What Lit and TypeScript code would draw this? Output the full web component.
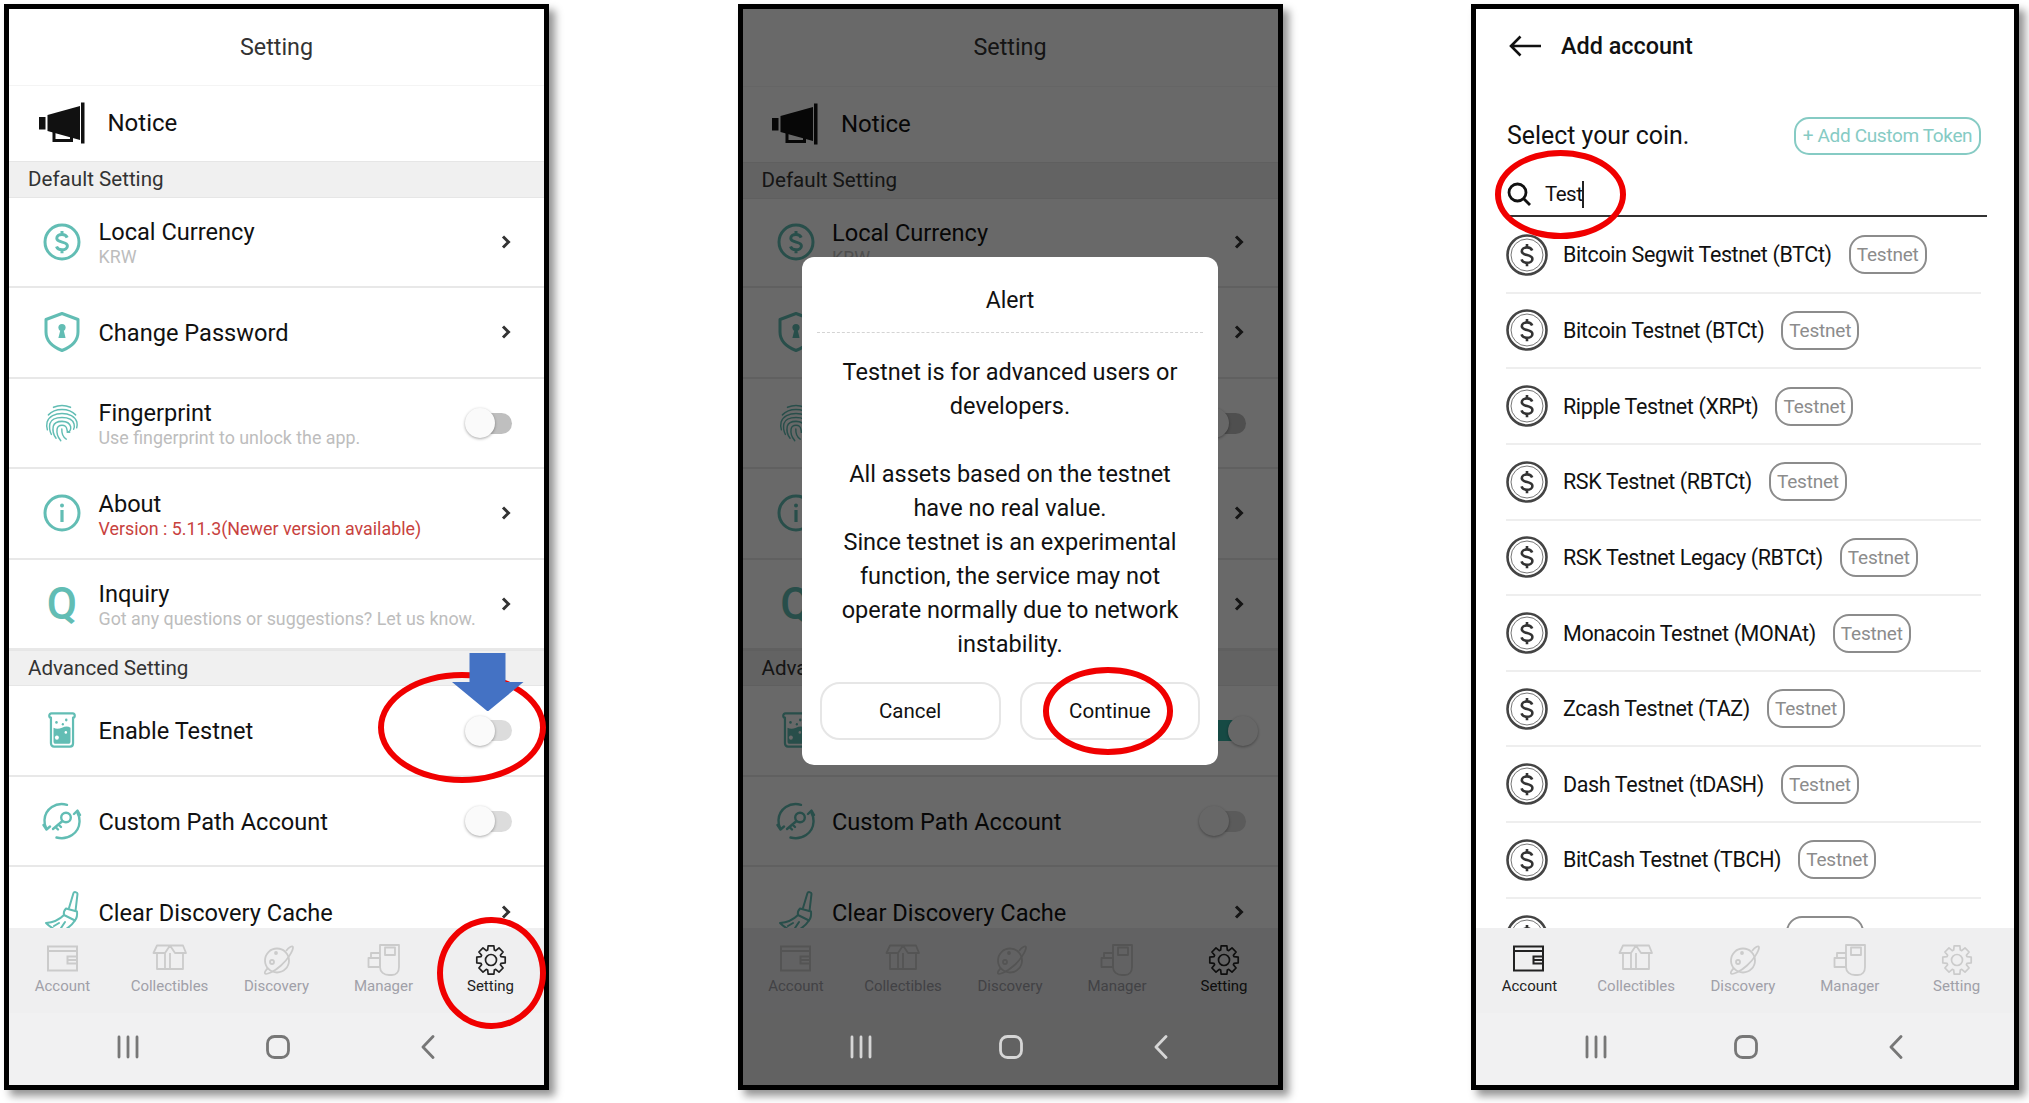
import { LitElement, css, html } from "lit";
import { customElement } from "lit/decorators.js";

const TEAL = "#62bdb4";

// 8-tooth gear outline, used by the Setting tab
function gearPath(cx: number, cy: number): string {
  const parts: string[] = [];
  const teeth = 8;
  for (let i = 0; i < teeth; i++) {
    const a = (i / teeth) * Math.PI * 2;
    const pts: Array<[number, number]> = [
      [a - 0.32, 10.5],
      [a - 0.2, 14.5],
      [a + 0.2, 14.5],
      [a + 0.32, 10.5],
    ];
    for (const [t, r] of pts) {
      const x = (cx + Math.cos(t) * r).toFixed(2);
      const y = (cy + Math.sin(t) * r).toFixed(2);
      parts.push(`${parts.length ? "L" : "M"}${x} ${y}`);
    }
  }
  return parts.join(" ") + " Z";
}

const dollarPath =
  "M25.2 15.6c-.8-2-2.7-3.2-5.2-3.2-3 0-5.2 1.6-5.2 3.9 0 5 10.6 2.6 10.6 7.6 0 2.3-2.3 3.9-5.4 3.9-2.6 0-4.7-1.2-5.5-3.4M20 9v3.4M20 27.8v3.4";

const rowIcons = {
  dollar: html`<svg viewBox="0 0 40 40" width="40" height="40" fill="none" stroke=${TEAL} stroke-width="3">
    <circle cx="20" cy="20" r="17"></circle><path d=${dollarPath}></path></svg>`,
  shield: html`<svg viewBox="0 0 40 40" width="40" height="40" fill="none" stroke=${TEAL} stroke-width="3" stroke-linejoin="round">
    <path d="M20 1.5 36 7.5V20c0 9-7 15-16 18.5C11 35 4 29 4 20V7.5Z"></path>
    <circle cx="20" cy="15.5" r="3.6" fill=${TEAL} stroke="none"></circle>
    <path d="M18.6 17h2.8l2.2 9h-7.2Z" fill=${TEAL} stroke="none"></path></svg>`,
  finger: html`<svg viewBox="0 0 40 40" width="34" height="38" preserveAspectRatio="none" fill="none" stroke=${TEAL} stroke-width="1.7" stroke-linecap="round">
    <path d="M10 3.5c6.500-2.500 13.500-2.500 20 0"></path>
    <path d="M4 11.500C8 7.500 14 5.800 20 5.800s12 1.700 16 5.700"></path>
    <path d="M2.800 27c-1-3-1-5.500-.3-8C4.500 13 12 10 20 10s15.500 3 17.500 9c.5 2 .4 4-.2 6"></path>
    <path d="M7.500 32c-2-3.500-2.700-7.500-1.700-11.500C7.300 16.500 13 14.200 20 14.200s12.700 2.300 14.200 6.800c.6 2.200.3 4-.5 5.500"></path>
    <path d="M13 36c-3-3.500-4.300-8-3.300-12.500C10.800 20 15 18.300 20 18.300s9.200 2 10.200 5.700c.5 3-1.200 5.800-4.200 5.600"></path>
    <path d="M18.500 38.500c-3.500-3.500-5-8-4.300-12 .5-2.800 3-4.200 5.800-4.200s5.300 1.500 5.700 4.200c.3 2.500 1.500 3.500 3.300 3.200"></path>
    <path d="M25 37c-3.500-2-5.500-6-5.200-10.500"></path></svg>`,
  info: html`<svg viewBox="0 0 40 40" width="40" height="40" fill="none" stroke=${TEAL} stroke-width="3">
    <circle cx="20" cy="20" r="17"></circle>
    <circle cx="20" cy="12.500" r="2" fill=${TEAL} stroke="none"></circle>
    <rect x="18.400" y="17" width="3.200" height="12" fill=${TEAL} stroke="none"></rect></svg>`,
  beaker: html`<svg viewBox="0 0 40 40" width="34" height="38" preserveAspectRatio="none" fill="none" stroke=${TEAL} stroke-width="2.600" stroke-linejoin="round">
    <path d="M5 5c0-1.500 1-2.500 2.500-2.500h25C34 2.500 35 3.500 35 5c0 1.500-1 2-2 2v27c0 2-1.500 3.500-3.500 3.500h-19C8.500 37.500 7 36 7 34V7c-1 0-2-.5-2-2Z"></path>
    <path d="M10 17.500c3 1.500 6 1.500 10 0s7-1.500 10 0V32c0 1.500-1 2.500-2.500 2.500h-15C11 34.500 10 33.500 10 32Z" fill=${TEAL} stroke="none"></path>
    <circle cx="14" cy="28" r="2.300" fill="#fff" stroke="none"></circle>
    <circle cx="24.500" cy="22.500" r="1.500" fill="#fff" stroke="none"></circle>
    <circle cx="13.500" cy="12" r="1.500" fill=${TEAL} stroke="none"></circle>
    <circle cx="25" cy="9.500" r="1.500" fill=${TEAL} stroke="none"></circle>
    <circle cx="21" cy="14" r="1.300" fill=${TEAL} stroke="none"></circle></svg>`,
  path: html`<svg viewBox="0 0 40 40" width="40" height="40" fill="none" stroke=${TEAL} stroke-width="2.400" stroke-linecap="round" stroke-linejoin="round">
    <path d="M25 3.800C14 .5 3 8 2.500 19c-.2 3 .5 6 1.800 8.500"></path>
    <path d="M14.500 36.500C26 39.500 37 32 37.500 21c.2-3.500-.6-6.500-2-9"></path>
    <path d="M32 13l3.500-3.500L38 14M1.500 24l3 4.500 3.500-3"></path>
    <circle cx="24" cy="16.500" r="4.800"></circle>
    <path d="M20.500 20 11 28M13.500 26l2.500 2.500M16.500 23.500l2.500 2.500"></path></svg>`,
  broom: html`<svg viewBox="0 0 40 44" width="40" height="44" fill="none" stroke=${TEAL} stroke-width="2" stroke-linejoin="round" stroke-linecap="round">
    <path d="M27 18 31.500 3c.5-1.500 4-1 4 .8L33.500 21"></path>
    <path d="M24 18.500 35 21.500c.5 4-.5 7-2 9L22 25c-.5-2 .5-5 2-6.500Z"></path>
    <path d="M22 25c-4 4-10 7.500-18 8 3 3 8 6.500 14 9 4-1 11-5.500 15-11.500M12 36l5-3M19 38l4-6"></path></svg>`,
};

const megaphone = html`<svg viewBox="0 0 46 42" width="46" height="42" fill="#111">
  <rect x="0" y="15" width="6.500" height="12.500"></rect>
  <path d="M8.500 13 41 4v34L8.500 29Z"></path>
  <rect x="42" y="0.500" width="3.500" height="41"></rect>
  <path d="M15 29v9.500h17.500V34" fill="none" stroke="#111" stroke-width="3"></path></svg>`;

const chevron = html`<svg class="chev" viewBox="0 0 10 14" width="10" height="14" fill="none" stroke="#333" stroke-width="3" stroke-linejoin="miter">
  <path d="M2 1.500 7.500 7 2 12.500"></path></svg>`;

const tabIcons = {
  wallet: html`<svg viewBox="0 0 36 36" width="36" height="36" fill="none" stroke="currentColor" stroke-width="2">
    <rect x="3" y="4.500" width="29" height="24"></rect><path d="M3 9h29M32 14.500h-9.500v7H32M22.500 18H32"></path></svg>`,
  box: html`<svg viewBox="0 0 36 36" width="36" height="36" fill="none" stroke="currentColor" stroke-width="1.800" stroke-linejoin="round">
    <path d="M5 12v15h26V12M18 11v16M13 11v16M1.500 11 5 3.500h13L13 11ZM34 11 31 3.500H18L23 11Z"></path><path d="M13 11H1.500M23 11h11"></path></svg>`,
  planet: html`<svg viewBox="0 0 36 36" width="36" height="36" fill="none" stroke="currentColor" stroke-width="1.800">
    <circle cx="18" cy="18.500" r="12"></circle><circle cx="13" cy="20" r="2"></circle><circle cx="17" cy="11" r="1"></circle>
    <path d="M27 9c3-4 7-6 7-3.500 0 3-5 12-12 18-7 6.500-15 9.500-16 8-.7-1 .5-3 3-5.500"></path></svg>`,
  manager: html`<svg viewBox="0 0 36 36" width="36" height="36" fill="none" stroke="currentColor" stroke-width="1.800" stroke-linejoin="round">
    <path d="M14 3h19v22c0 5-3 8-7 8h-3c-5 0-9-3-9-8Z"></path><rect x="19" y="5.500" width="10" height="7.500"></rect>
    <path d="M14 11H5v5h9M2.500 16H14v9H2.500Z"></path></svg>`,
  gear: html`<svg viewBox="0 0 36 36" width="36" height="36" fill="none" stroke="currentColor" stroke-width="1.700" stroke-linejoin="round">
    <path d=${gearPath(18, 18)}></path><circle cx="18" cy="18" r="5.500"></circle></svg>`,
};

const navIcons = html`<div class="nav">
  <svg viewBox="0 0 30 24" width="30" height="24" fill="none" stroke="currentColor" stroke-width="2.800" stroke-linecap="round">
    <path d="M6 2v20M15 2v20M24 2v20"></path></svg>
  <svg viewBox="0 0 30 24" width="30" height="24" fill="none" stroke="currentColor" stroke-width="2.800">
    <rect x="4.500" y="1.500" width="21" height="21" rx="7"></rect></svg>
  <svg viewBox="0 0 30 24" width="30" height="24" fill="none" stroke="currentColor" stroke-width="2.800" stroke-linecap="round" stroke-linejoin="round">
    <path d="M20 1.500 10 12l10 10.500"></path></svg>
</div>`;

const tabs = [
  { icon: tabIcons.wallet, label: "Account" },
  { icon: tabIcons.box, label: "Collectibles" },
  { icon: tabIcons.planet, label: "Discovery" },
  { icon: tabIcons.manager, label: "Manager" },
  { icon: tabIcons.gear, label: "Setting" },
];

interface Row {
  icon: keyof typeof rowIcons | "q";
  title: string;
  sub?: string;
  red?: boolean;
  toggle?: "dark" | "light";
}

const defaultRows: Row[] = [
  { icon: "dollar", title: "Local Currency", sub: "KRW" },
  { icon: "shield", title: "Change Password" },
  { icon: "finger", title: "Fingerprint", sub: "Use fingerprint to unlock the app.", toggle: "dark" },
  { icon: "info", title: "About", sub: "Version : 5.11.3(Newer version available)", red: true },
  { icon: "q", title: "Inquiry", sub: "Got any questions or suggestions? Let us know." },
];

const advancedRows: Row[] = [
  { icon: "beaker", title: "Enable Testnet", toggle: "light" },
  { icon: "path", title: "Custom Path Account", toggle: "light" },
  { icon: "broom", title: "Clear Discovery Cache" },
];

const coins = [
  "Bitcoin Segwit Testnet (BTCt)",
  "Bitcoin Testnet (BTCt)",
  "Ripple Testnet (XRPt)",
  "RSK Testnet (RBTCt)",
  "RSK Testnet Legacy (RBTCt)",
  "Monacoin Testnet (MONAt)",
  "Zcash Testnet (TAZ)",
  "Dash Testnet (tDASH)",
  "BitCash Testnet (TBCH)",
  "Litecoin Testnet (LTCt)",
];

@customElement("app-root")
export class AppRoot extends LitElement {
  private renderRow(row: Row, enabled: boolean) {
    const isOn = enabled && row.title === "Enable Testnet";
    return html`
      <div class="row">
        <div class="row-icon">${row.icon === "q" ? html`<span class="q">Q</span>` : rowIcons[row.icon]}</div>
        <div class="row-text ${row.sub ? "two" : ""}">
          <div class="row-title">${row.title}</div>
          ${row.sub ? html`<div class="row-sub ${row.red ? "red" : ""}">${row.sub}</div>` : null}
        </div>
        ${row.toggle
          ? html`<div class="toggle ${row.toggle} ${isOn ? "on" : ""}"><i></i></div>`
          : chevron}
      </div>
    `;
  }

  private renderTabs(active: string) {
    return html`
      <div class="tabs">
        ${tabs.map(
          (t) => html`<div class="tab ${t.label === active ? "active" : ""}">
            ${t.icon}<span>${t.label}</span>
          </div>`
        )}
      </div>
      ${navIcons}
    `;
  }

  private renderSettings(enabled: boolean) {
    return html`
      <div class="head">Setting</div>
      <div class="notice">${megaphone}<span>Notice</span></div>
      <div class="section">Default Setting</div>
      ${defaultRows.map((r) => this.renderRow(r, enabled))}
      <div class="section second">Advanced Setting</div>
      <div class="clip">${advancedRows.map((r) => this.renderRow(r, enabled))}</div>
      ${this.renderTabs("Setting")}
    `;
  }

  private renderDialog() {
    return html`
      <div class="overlay">
        <div class="dialog">
          <div class="dlg-title">Alert</div>
          <div class="dlg-body">
            Testnet is for advanced users or<br />developers.<br /><br />All assets based on the testnet<br />have no real
            value.<br />Since testnet is an experimental<br />function, the service may not<br />operate normally due to
            network<br />instability.
          </div>
          <div class="dlg-actions">
            <button>Cancel</button>
            <button>Continue</button>
          </div>
        </div>
      </div>
    `;
  }

  private renderCoins() {
    return html`
      <div class="add-head">
        <svg viewBox="0 0 32 22" width="32" height="22" fill="none" stroke="#111" stroke-width="2.600">
          <path d="M32 11H2M11.500 1.500 2 11l9.500 9.500"></path>
        </svg>
        <span>Add account</span>
      </div>
      <div class="select-row">
        <span>Select your coin.</span>
        <div class="pill">+ Add Custom Token</div>
      </div>
      <div class="search">
        <svg viewBox="0 0 24 24" width="24" height="24" fill="none" stroke="#111" stroke-width="2.800">
          <circle cx="10.500" cy="10.500" r="8.500"></circle>
          <path d="M16.500 16.500 23 23"></path>
        </svg>
        <span>Test</span><i class="caret"></i>
      </div>
      <div class="clip coin-list">
        ${coins.map(
          (name) => html`
            <div class="coin">
              <svg viewBox="0 0 42 42" width="42" height="42" fill="none">
                <circle cx="21" cy="21" r="19.500" stroke="#444" stroke-width="2.600"></circle>
                <circle cx="21" cy="21" r="16" stroke="#777" stroke-width="1"></circle>
                <path transform="translate(1 1)" d=${dollarPath} stroke="#333" stroke-width="2.600"></path>
              </svg>
              <span class="coin-name">${name}</span>
              <span class="badge">Testnet</span>
            </div>
          `
        )}
      </div>
      ${this.renderTabs("Account")}
    `;
  }

  render() {
    return html`
      <div class="phone">
        <div class="screen">${this.renderSettings(false)}</div>
        <div class="ring ring-toggle"></div>
        <div class="ring ring-setting"></div>
        <svg class="down-arrow" viewBox="0 0 71.500 58.500" width="71.500" height="58.500">
          <path d="M17.500 0h36v29h18L35.750 58.500 0 29h17.500Z" fill="#4472c4"></path>
        </svg>
      </div>
      <div class="phone dim">
        <div class="screen">${this.renderSettings(true)} ${this.renderDialog()}</div>
        <div class="ring ring-continue"></div>
      </div>
      <div class="phone wide">
        <div class="screen coins">${this.renderCoins()}</div>
        <div class="ring ring-search"></div>
      </div>
    `;
  }

  static styles = css`
    :host {
      display: grid;
      grid-template-columns: 545px 545px 548px;
      column-gap: 188.5px;
      width: 2029px;
      height: 1103px;
      padding: 4px 0 0 4px;
      box-sizing: border-box;
      background: #fff;
      font-family: Roboto, "Liberation Sans", sans-serif;
      color: #111;
    }
    .phone {
      position: relative;
      height: 1086px;
      box-sizing: border-box;
      border: 5.5px solid #000;
      box-shadow: 6px 6px 8px rgba(0, 0, 0, 0.42);
    }
    .screen {
      position: relative;
      display: flex;
      flex-direction: column;
      height: 100%;
      overflow: hidden;
      background: #fff;
    }
    .head {
      flex: none;
      height: 76.5px;
      display: flex;
      align-items: center;
      justify-content: center;
      font-size: 23.3px;
      color: #333;
      border-bottom: 1px solid #f4f4f4;
      box-sizing: border-box;
    }
    .dim .head {
      height: 77.5px;
    }
    .notice {
      flex: none;
      height: 75px;
      padding-left: 29.5px;
      display: flex;
      align-items: center;
      gap: 23px;
      font-size: 24px;
      box-sizing: border-box;
    }
    .section {
      flex: none;
      height: 37px;
      padding-left: 19px;
      display: flex;
      align-items: center;
      font-size: 20.6px;
      color: #333;
      background: #f0f0f0;
      border-top: 1.500px solid #e6e6e6;
      border-bottom: 1.500px solid #e6e6e6;
      box-sizing: border-box;
    }
    .section.second {
      height: 36px;
    }
    .row {
      flex: none;
      height: 90.5px;
      padding: 0 31px 0 31px;
      display: flex;
      align-items: center;
      box-sizing: border-box;
      border-bottom: 2px solid #e8e8e8;
    }
    .dim .notice + .section + .row {
      height: 89.5px;
    }
    .row:last-child {
      border-bottom: none;
    }
    .row-icon {
      flex: none;
      width: 44px;
      height: 44px;
      display: flex;
      align-items: center;
      justify-content: center;
      margin-right: 14.5px;
    }
    .q {
      font-size: 44px;
      font-weight: 500;
      color: #62bdb4;
      line-height: 44px;
    }
    .row-text {
      flex: 1;
      min-width: 0;
      padding-top: 3px;
    }
    .row-text.two {
      padding-top: 6px;
    }
    .row-title {
      font-size: 23.6px;
      line-height: 25px;
      color: #111;
    }
    .row-sub {
      font-size: 17.85px;
      line-height: 24px;
      color: #bdbdbd;
      white-space: nowrap;
    }
    .row-sub.red {
      color: #c8423e;
    }
    .chev {
      flex: none;
      margin-right: 2px;
    }
    .dim .chev {
      margin-right: 3px;
    }
    .toggle {
      position: relative;
      flex: none;
      width: 44px;
      height: 21px;
      margin: 1px 1px 0 0;
      border-radius: 11px;
      background: #dcdcdc;
    }
    .toggle.dark {
      background: #bfbfbf;
    }
    .toggle.on {
      background: #36b3a6;
    }
    .toggle i {
      position: absolute;
      left: -3px;
      top: -4.500px;
      width: 30px;
      height: 30px;
      border-radius: 50%;
      background: #fafafa;
      box-shadow: 0 1px 3px rgba(0, 0, 0, 0.35);
    }
    .toggle.on i {
      left: 26px;
    }
    .clip {
      flex: 1;
      min-height: 0;
      overflow: hidden;
    }
    .tabs {
      flex: none;
      height: 85px;
      display: grid;
      grid-template-columns: repeat(5, 1fr);
      background: #efeff0;
      padding-top: 14px;
      box-sizing: border-box;
    }
    .coins .tabs {
      padding-right: 4px;
    }
    .tab {
      display: flex;
      flex-direction: column;
      align-items: center;
      color: #cbcbcb;
      font-size: 15px;
      line-height: 18px;
    }
    .tab span {
      color: #a0a0a8;
      margin-top: -1px;
    }
    .tab.active {
      color: #222;
    }
    .tab.active span {
      color: #222;
    }
    .nav {
      flex: none;
      height: 72.500px;
      padding: 0 0 3px 2px;
      display: flex;
      align-items: center;
      justify-content: center;
      gap: 120px;
      box-sizing: border-box;
      background: #f1f1f2;
      color: #777;
    }
    .overlay {
      position: absolute;
      inset: 0 0 72.500px 0;
      display: flex;
      justify-content: center;
      align-items: flex-start;
      padding-top: 247.500px;
      box-sizing: border-box;
      background: rgba(0, 0, 0, 0.59);
    }
    .dim .nav {
      background: #626262;
      color: #d6d6d6;
    }
    .dialog {
      width: 416.500px;
      height: 508px;
      box-sizing: border-box;
      background: #fff;
      border-radius: 12px;
      padding: 0 18px;
      display: flex;
      flex-direction: column;
      align-items: stretch;
    }
    .dlg-title {
      flex: none;
      height: 76.500px;
      margin: 0 -3px;
      padding-top: 13px;
      display: flex;
      align-items: center;
      justify-content: center;
      box-sizing: border-box;
      font-size: 23px;
      border-bottom: 1px dashed #d4d4d4;
    }
    .dlg-body {
      flex: none;
      height: 306px;
      margin-top: 22px;
      text-align: center;
      font-size: 23.500px;
      line-height: 34px;
      white-space: nowrap;
    }
    .dlg-actions {
      margin-top: 21px;
      display: flex;
      gap: 19px;
    }
    .dlg-actions button {
      flex: 1;
      height: 58px;
      background: #fff;
      border: 2px solid #e6e6e6;
      border-radius: 20px;
      font: 400 20.500px Roboto, sans-serif;
      color: #111;
    }
    .ring {
      position: absolute;
      box-sizing: border-box;
      border: 6.500px solid #f00000;
      border-radius: 50%;
    }
    .ring-toggle {
      left: 368.500px;
      top: 662.500px;
      width: 168px;
      height: 111px;
    }
    .ring-setting {
      left: 428px;
      top: 907.500px;
      width: 108.500px;
      height: 112px;
    }
    .ring-continue {
      left: 300px;
      top: 658px;
      width: 130.500px;
      height: 87.500px;
    }
    .ring-search {
      left: 18.500px;
      top: 141px;
      width: 131px;
      height: 88.500px;
    }
    .down-arrow {
      position: absolute;
      left: 443px;
      top: 643.500px;
    }
    .add-head {
      flex: none;
      height: 74px;
      padding-left: 33px;
      display: flex;
      align-items: center;
      gap: 20px;
      font-size: 23.400px;
      font-weight: 500;
    }
    .select-row {
      flex: none;
      margin-top: 33.500px;
      height: 38px;
      padding: 0 33px 0 31px;
      display: flex;
      align-items: center;
      justify-content: space-between;
      font-size: 24.900px;
    }
    .pill {
      height: 38px;
      width: 187px;
      box-sizing: border-box;
      border: 2px solid #86cbc4;
      border-radius: 15px;
      color: #86cbc4;
      font-size: 19px;
      letter-spacing: -0.35px;
      display: flex;
      align-items: center;
      justify-content: center;
      white-space: nowrap;
    }
    .search {
      flex: none;
      height: 62px;
      margin: 0 27.500px 0 31px;
      padding-top: 21px;
      box-sizing: border-box;
      border-bottom: 2px solid #333;
      display: flex;
      align-items: flex-start;
      font-size: 20.500px;
      letter-spacing: -0.5px;
      line-height: 36px;
    }
    .search svg {
      margin: 6px 14px 0 0;
    }
    .caret {
      width: 2px;
      height: 27px;
      margin-top: 5px;
      background: #222;
    }
    .coin-list {
      padding: 1.500px 33px 0 30px;
    }
    .coin {
      height: 75.650px;
      box-sizing: border-box;
      border-bottom: 2px solid #eeeeee;
      display: flex;
      align-items: center;
      font-size: 21.500px;
      letter-spacing: -0.38px;
    }
    .coin svg {
      flex: none;
      margin-right: 15px;
    }
    .coin-name {
      white-space: nowrap;
    }
    /* last row is cut by the tab bar, only the tips of its text show */
    .coin:last-child .coin-name {
      margin-top: 5px;
    }
    .badge {
      flex: none;
      margin-left: 17px;
      width: 78px;
      height: 39px;
      box-sizing: border-box;
      border: 2px solid #8c8c8c;
      border-radius: 16px;
      display: flex;
      align-items: center;
      justify-content: center;
      color: #8c8c8c;
      font-size: 19px;
      letter-spacing: -0.2px;
    }
  `;
}
